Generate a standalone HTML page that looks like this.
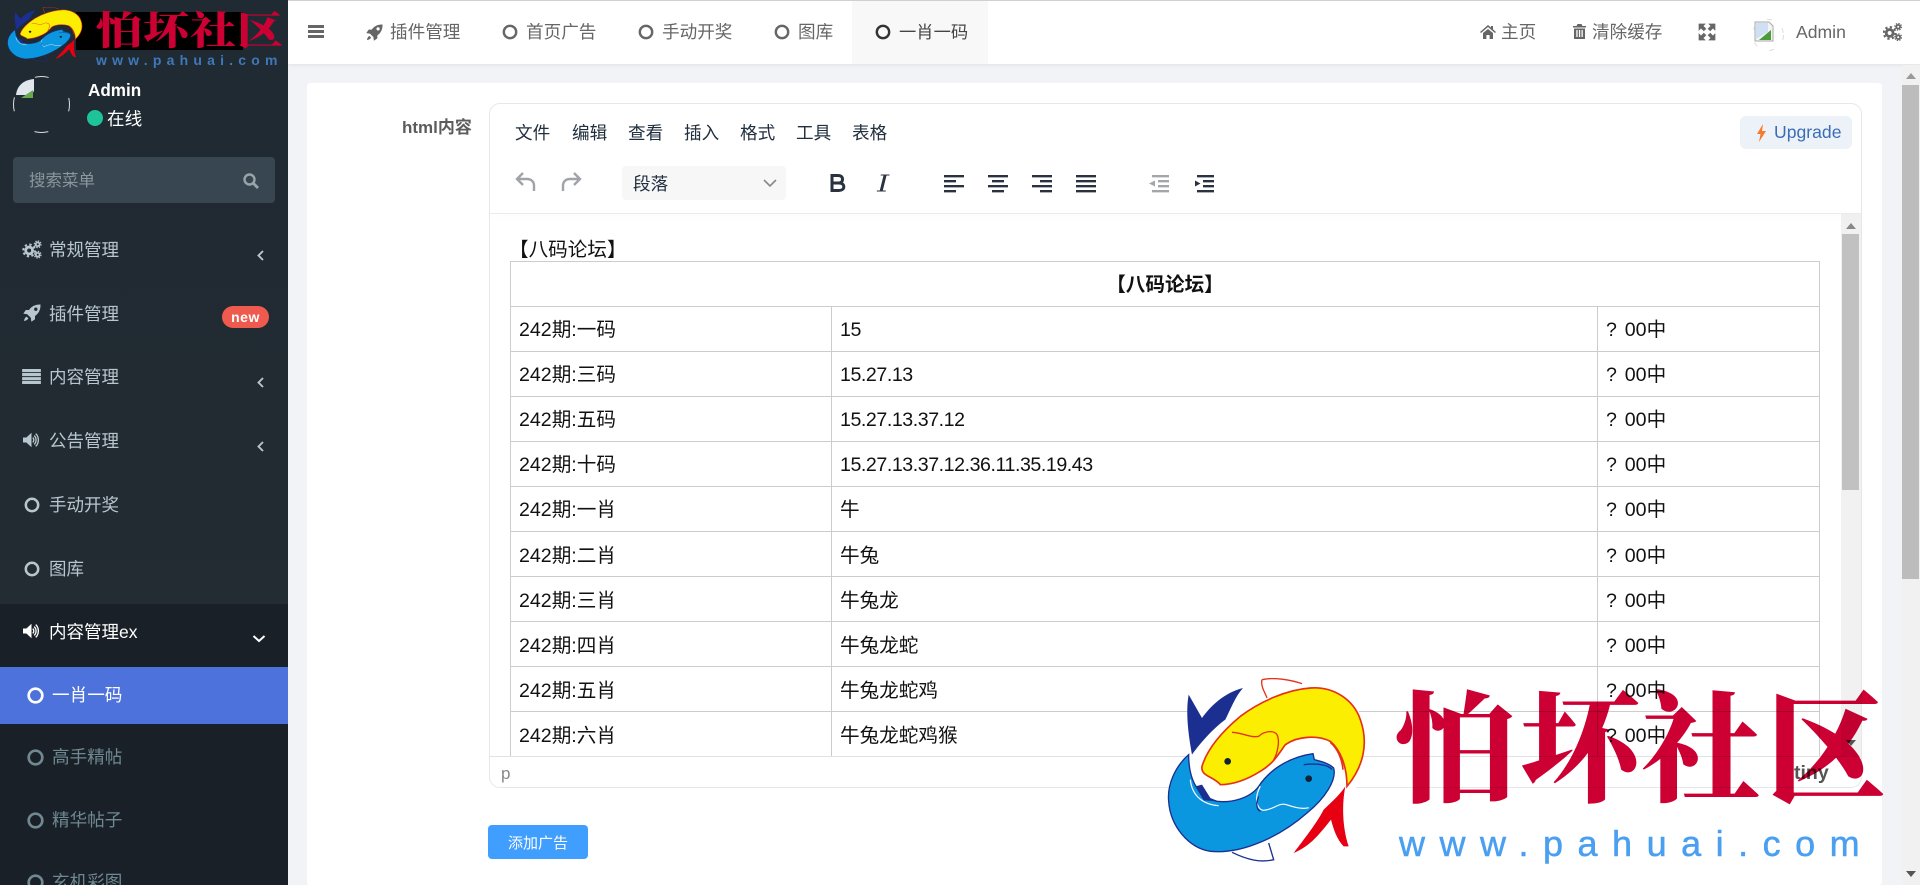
<!DOCTYPE html>
<html lang="zh"><head><meta charset="utf-8"><title>怕坏社区</title>
<style>
*{box-sizing:border-box}
html,body{margin:0;padding:0;width:1920px;height:885px;overflow:hidden;background:#f2f3f7;font-family:"Liberation Sans","Noto Sans CJK SC",sans-serif}
.a{position:absolute;white-space:pre;line-height:1}
svg.a{display:block;overflow:visible}
#side{position:absolute;left:0;top:0;width:288px;height:885px;background:linear-gradient(#202a32,#222b32 60%,#272f36);overflow:hidden}
.m{color:#b8c7ce;font-size:17.5px}
.h{color:#666;font-size:17.6px}
.ed{color:#222f3e;font-size:17.6px}
td{border:1px solid #ccc;padding:4px 0 0 8px;font-size:19.6px;color:#111;white-space:pre;height:45.05px;line-height:1}
td:last-child{word-spacing:-1.5px}
td.n{letter-spacing:-.44px}
table{border-collapse:collapse;table-layout:fixed;position:absolute;left:20px;top:47px;width:1309px;font-family:"Liberation Sans","Noto Sans CJK SC",sans-serif}
.zh{position:absolute;font-family:"Noto Serif CJK SC",serif;font-weight:900;color:#cc0033;line-height:1}
</style></head><body>
<svg width="0" height="0" style="position:absolute">
<defs>
<symbol id="cogs" viewBox="0 0 20 20"><circle cx="7" cy="11" r="3.6" fill="none" stroke="currentColor" stroke-width="3"/><circle cx="7" cy="11" r="6.2" fill="none" stroke="currentColor" stroke-width="2.2" stroke-dasharray="2.4 2.46"/><circle cx="16" cy="4.5" r="2" fill="none" stroke="currentColor" stroke-width="1.8"/><circle cx="16" cy="4.5" r="3.5" fill="none" stroke="currentColor" stroke-width="1.3" stroke-dasharray="1.5 1.25"/><circle cx="16" cy="15.5" r="2" fill="none" stroke="currentColor" stroke-width="1.8"/><circle cx="16" cy="15.5" r="3.5" fill="none" stroke="currentColor" stroke-width="1.3" stroke-dasharray="1.5 1.25"/></symbol>
<symbol id="rocket" viewBox="0 0 18 18"><path fill="currentColor" fill-rule="evenodd" d="M17.5.5c-5.2-.2-9 1.800-11.500 5.500H2.800L.3 9.600l3.900.6 3.600 3.600.6 3.900 3.600-2.500V12c3.700-2.600 5.700-6.300 5.500-11.500zM12.800 3.500a1.700 1.700 0 1 1 0 3.400 1.700 1.700 0 0 1 0-3.400zM3.600 12.600c-1.300.7-2.200 2-2.600 4.400 2.400-.4 3.700-1.300 4.400-2.600z"/></symbol>
<symbol id="vol" viewBox="0 0 20 18"><path fill="currentColor" d="M0 6h4l6-5.500v17L4 12H0z"/><path fill="none" stroke="currentColor" stroke-width="1.600" d="M11.500 6.200c1.600 1.500 1.600 4.100 0 5.600M13.200 3.800c2.900 2.800 2.900 7.600 0 10.400M15 1.500c4.100 4.100 4.100 10.900 0 15"/></symbol>
<symbol id="bars" viewBox="0 0 20 16"><path fill="currentColor" d="M0 0h20v3.300H0zM0 4.300h20v3.300H0zM0 8.600h20v3.300H0zM0 12.700h20v3.300H0z"/></symbol>
<symbol id="fish" viewBox="20 25 600 555" preserveAspectRatio="none">
<path fill="#1a2f8f" d="M85 75L125 145C150 110 190 70 248 55C225 80 210 120 195 150C160 175 120 220 95 255C85 200 75 130 85 75Z"/>
<path fill="#0b97e0" stroke="#1a2f8f" stroke-width="4" d="M85 255C45 290 20 345 25 395C30 470 85 535 150 545C245 555 360 500 440 430C495 385 530 330 520 295C505 280 480 275 462 270L458 252C400 260 335 290 295 350C270 385 215 400 170 395C120 385 85 340 85 255Z"/>
<path fill="#1a2f8f" d="M105 350L125 345L150 385L175 395L130 392Z"/>
<path fill="none" stroke="#fff" stroke-width="3.500" d="M300 350C280 385 290 420 310 422C340 420 355 398 378 405C400 412 425 420 445 414M90 330C95 380 130 405 175 408"/>
<path fill="none" stroke="#1a2f8f" stroke-width="4" d="M325 520L340 570C300 580 260 570 215 548"/>
<path fill="none" stroke="#1a2f8f" stroke-width="4" d="M295 380C285 405 290 420 300 425M430 285C470 280 505 285 515 300"/>
<path fill="#e60012" d="M555 350C545 400 545 470 565 530L550 530C530 510 520 480 512 450C480 490 450 530 400 550C430 510 470 460 490 420C510 400 535 380 555 350Z"/>
<path fill="#fbee00" stroke="#e6301a" stroke-width="5" d="M125 290C140 240 180 190 240 140C300 95 380 60 450 55C520 50 580 90 600 150C625 220 610 290 560 350C560 290 540 240 510 215C470 195 410 200 375 225C350 260 340 280 300 305C260 330 220 345 180 345C160 320 120 320 125 290Z"/>
<path fill="none" stroke="#e6301a" stroke-width="4" d="M215 188C250 190 270 205 295 200C310 185 340 180 350 195C360 215 350 255 340 270M305 30C340 22 390 30 425 42M305 30C300 50 315 70 320 85"/>
<path fill="none" stroke="#e6301a" stroke-width="5" d="M510 218C530 235 545 265 548 300"/>
<circle cx="202" cy="275" r="10" fill="#123"/><circle cx="445" cy="327" r="10" fill="#123"/>
</symbol>
</defs></svg>

<div style="position:absolute;left:288px;top:0;width:1632px;height:64px;background:#fff;border-top:1px solid #cfd1cf;box-shadow:0 1px 4px rgba(0,0,0,.08)"></div>
<div style="position:absolute;left:852px;top:1px;width:136px;height:63px;background:#f8f8f9"></div>

<!-- header -->
<svg class="a" style="left:308px;top:25px" width="16" height="13"><path fill="#666" d="M0 0h16v3H0zM0 5h16v3H0zM0 10h16v3H0z"/></svg>
<svg class="a" style="left:366px;top:24px;color:#666" width="17" height="17"><use href="#rocket"/></svg>
<div class="a h" style="left:390px;top:24px">插件管理</div>
<svg class="a" style="left:502px;top:24px" width="16" height="16"><circle cx="8" cy="8" r="6.200" fill="none" stroke="#666" stroke-width="2.400"/></svg>
<div class="a h" style="left:526px;top:24px">首页广告</div>
<svg class="a" style="left:638px;top:24px" width="16" height="16"><circle cx="8" cy="8" r="6.200" fill="none" stroke="#666" stroke-width="2.400"/></svg>
<div class="a h" style="left:662px;top:24px">手动开奖</div>
<svg class="a" style="left:774px;top:24px" width="16" height="16"><circle cx="8" cy="8" r="6.200" fill="none" stroke="#666" stroke-width="2.400"/></svg>
<div class="a h" style="left:798px;top:24px">图库</div>
<svg class="a" style="left:875px;top:24px" width="16" height="16"><circle cx="8" cy="8" r="6.200" fill="none" stroke="#333" stroke-width="2.400"/></svg>
<div class="a h" style="left:899px;top:24px;color:#444;font-size:17.300px">一肖一码</div>

<svg class="a" style="left:1480px;top:24px" width="16" height="15" viewBox="0 0 16 15"><path fill="#666" d="M0 8L8 1l3 2.500V2h2v3.300L16 8l-1 1-7-6-7 6zM3 9l5-4 5 4v6H9.600v-4H6.400v4H3z"/></svg>
<div class="a h" style="left:1501px;top:24px">主页</div>
<svg class="a" style="left:1573px;top:24px" width="13" height="15" viewBox="0 0 13 15"><path fill="#666" fill-rule="evenodd" d="M0 2h3.500L4.500 0h4l1 2H13v1.500H0zM1 4.500h11V15H1zM3.300 6v7h1.300V6zM5.900 6v7h1.300V6zM8.500 6v7h1.300V6z"/></svg>
<div class="a h" style="left:1592px;top:24px">清除缓存</div>
<svg class="a" style="left:1699px;top:24px" width="16" height="16" viewBox="0 0 16 16"><path fill="#666" stroke="#666" stroke-width=".7" d="M0 0h6L4 2l2.800 2.800-2 2L2 4 0 6zM16 0v6l-2-2-2.800 2.800-2-2L12 2l-2-2zM0 16v-6l2 2 2.800-2.800 2 2L4 14l2 2zM16 16h-6l2-2-2.800-2.800 2-2L14 12l2-2z"/></svg>
<!-- avatar top -->
<svg class="a" style="left:1752px;top:19px" width="32" height="32" viewBox="0 0 32 32"><circle cx="16" cy="16" r="15.500" fill="none" stroke="#ddd" stroke-width="1" stroke-dasharray="5 13"/><path fill="#f4f4f4" stroke="#aaa" d="M3 3h14l4 4v15H3z"/><path fill="#cfe0f4" d="M4 4h12v9L4 20z"/><path fill="#4d9a3c" d="M7 21l12-10v10z"/></svg>
<div class="a" style="left:1796px;top:24px;color:#666;font-size:17.600px">Admin</div>
<svg class="a" style="left:1883px;top:22px;color:#666" width="19" height="20"><use href="#cogs"/></svg>

<!-- card -->
<div style="position:absolute;left:307px;top:83px;width:1575px;height:802px;background:#fff;border-radius:3px"></div>
<div class="a" style="left:402px;top:119px;color:#5c5c5c;font-size:17px;font-weight:700">html内容</div>

<!-- editor -->
<div style="position:absolute;left:489px;top:103px;width:1373px;height:685px;border:1px solid #e6e7ea;border-radius:11px;background:#fff;overflow:hidden">
 <div style="position:absolute;left:0;top:109px;width:1371px;height:1px;background:#ececec;box-shadow:0 2px 8px rgba(0,0,0,.08);z-index:3"></div>
 <div style="position:absolute;left:0;top:110px;width:1351px;height:543px;overflow:hidden">
  <div class="a" style="left:19px;top:27px;font-size:19.600px;color:#111">【八码论坛】</div>
  <table><colgroup><col style="width:321px"><col style="width:766px"><col style="width:222px"></colgroup>
  <tr><td colspan="3" style="text-align:center;font-weight:700;padding:4px 0 0">【八码论坛】</td></tr>
  <tr><td>242期:一码</td><td class="n">15</td><td>?  00中</td></tr>
  <tr><td>242期:三码</td><td class="n">15.27.13</td><td>?  00中</td></tr>
  <tr><td>242期:五码</td><td class="n">15.27.13.37.12</td><td>?  00中</td></tr>
  <tr><td>242期:十码</td><td class="n">15.27.13.37.12.36.11.35.19.43</td><td>?  00中</td></tr>
  <tr><td>242期:一肖</td><td>牛</td><td>?  00中</td></tr>
  <tr><td>242期:二肖</td><td>牛兔</td><td>?  00中</td></tr>
  <tr><td>242期:三肖</td><td>牛兔龙</td><td>?  00中</td></tr>
  <tr><td>242期:四肖</td><td>牛兔龙蛇</td><td>?  00中</td></tr>
  <tr><td>242期:五肖</td><td>牛兔龙蛇鸡</td><td>?  00中</td></tr>
  <tr><td>242期:六肖</td><td>牛兔龙蛇鸡猴</td><td>?  00中</td></tr>
  <tr><td>242期:七肖</td><td>牛兔龙蛇鸡猴狗</td><td>?  00中</td></tr>
  </table>
 </div>
 <div style="position:absolute;left:1351px;top:110px;width:20px;height:543px;background:#f1f1f1"></div>
 <div style="position:absolute;left:1352px;top:130px;width:17px;height:256px;background:#c1c1c1"></div>
 <svg class="a" style="left:1355px;top:119px" width="12" height="7"><path fill="#888" d="M6 0l5 6H1z"/></svg>
 <svg class="a" style="left:1355px;top:636px" width="12" height="7"><path fill="#555" d="M1 0h10L6 6z"/></svg>
 <div style="position:absolute;left:0;top:652px;width:1371px;height:1px;background:#e2e2e2"></div>
 <div class="a" style="left:11px;top:661px;font-size:17px;color:#888">p</div>
 <div class="a" style="left:1304px;top:660px;font-size:19.500px;font-weight:700;color:#555">tiny</div>
 <div style="position:absolute;left:1250px;top:12px;width:112px;height:33px;background:#edf2f9;border-radius:6px"></div>
 <svg class="a" style="left:1266px;top:20px" width="11" height="18" viewBox="0 0 11 18"><path fill="#f47b2a" d="M7 0L1 10h3.500L3 18l7-11H6z"/></svg>
 <div class="a" style="left:1284px;top:20px;color:#3a6db5;font-size:17.600px">Upgrade</div>

 <div class="a ed" style="left:25px;top:21px">文件</div><div class="a ed" style="left:82px;top:21px">编辑</div><div class="a ed" style="left:138px;top:21px">查看</div><div class="a ed" style="left:194px;top:21px">插入</div><div class="a ed" style="left:250px;top:21px">格式</div><div class="a ed" style="left:306px;top:21px">工具</div><div class="a ed" style="left:362px;top:21px">表格</div>

 <svg class="a" style="left:25px;top:67px" width="21" height="21" viewBox="0 0 21 21"><path fill="none" stroke="#a0a3a8" stroke-width="2.400" d="M8 2L2 8l6 6M2 8h10c4.500 0 7 3 7 6.500V20"/></svg>
 <svg class="a" style="left:71px;top:67px" width="21" height="21" viewBox="0 0 21 21"><path fill="none" stroke="#a0a3a8" stroke-width="2.400" d="M13 2l6 6-6 6M19 8H9c-4.500 0-7 3-7 6.500V20"/></svg>
 <div style="position:absolute;left:132px;top:62px;width:164px;height:34px;background:#f7f7f8;border-radius:4px"></div>
 <div class="a" style="left:143px;top:72px;color:#222f3e;font-size:17.600px">段落</div>
 <svg class="a" style="left:273px;top:75px" width="14" height="9"><path fill="none" stroke="#888" stroke-width="1.600" d="M1 1l6 6 6-6"/></svg>
 <svg class="a" style="left:340px;top:70px" width="16" height="18" viewBox="0 0 16 18"><path fill="none" stroke="#2a3240" stroke-width="3" d="M2 9h6.500c2.500 0 4-1.500 4-3.800S11 1.500 8 1.500H2V16.500h6.800c3 0 5-1.500 5-3.800S11.800 9 8.500 9"/></svg>
 <svg class="a" style="left:386px;top:70px" width="14" height="18" viewBox="0 0 14 18"><path fill="#2a3240" d="M5 .5h8.500v1h-3L6.800 16.500h3v1H.8v-1h3L7.500 1.500h-3z"/></svg>
 <svg class="a" style="left:454px;top:71px" width="22" height="18" viewBox="0 0 22 18"><path fill="#2a3240" d="M0 0h20v2.400H0zM0 5h12v2.400H0zM0 10h20v2.400H0zM0 15h12v2.400H0z"/></svg>
 <svg class="a" style="left:498px;top:71px" width="22" height="18" viewBox="0 0 22 18"><path fill="#2a3240" d="M0 0h20v2.400H0zM4 5h12v2.400H4zM0 10h20v2.400H0zM4 15h12v2.400H4z"/></svg>
 <svg class="a" style="left:542px;top:71px" width="22" height="18" viewBox="0 0 22 18"><path fill="#2a3240" d="M0 0h20v2.400H0zM8 5h12v2.400H8zM0 10h20v2.400H0zM8 15h12v2.400H8z"/></svg>
 <svg class="a" style="left:586px;top:71px" width="22" height="18" viewBox="0 0 22 18"><path fill="#2a3240" d="M0 0h20v2.400H0zM0 5h20v2.400H0zM0 10h20v2.400H0zM0 15h20v2.400H0z"/></svg>
 <svg class="a" style="left:659px;top:71px" width="22" height="18" viewBox="0 0 22 18"><path fill="#a3a6ab" d="M3 0h17v2.400H3zM9 5h11v2.400H9zM9 10h11v2.400H9zM3 15h17v2.400H3zM6 5.500v6L0 8.500z"/></svg>
 <svg class="a" style="left:704px;top:71px" width="22" height="18" viewBox="0 0 22 18"><path fill="#2a3240" d="M3 0h17v2.400H3zM9 5h11v2.400H9zM9 10h11v2.400H9zM3 15h17v2.400H3zM1 5.500v6L6.500 8.500z"/></svg>
</div>

<div style="position:absolute;left:488px;top:825px;width:100px;height:34px;background:#409eff;border-radius:4px"></div>
<div class="a" style="left:508px;top:836px;color:#fff;font-size:15px">添加广告</div>

<!-- page scrollbar -->
<div style="position:absolute;left:1902px;top:65px;width:18px;height:820px;background:#f1f1f1"></div>
<div style="position:absolute;left:1902px;top:85px;width:17px;height:494px;background:#bcbcbc"></div>
<svg class="a" style="left:1906px;top:73px" width="10" height="6"><path fill="#999" d="M5 0l5 6H0z"/></svg>
<svg class="a" style="left:1906px;top:871px" width="10" height="6"><path fill="#555" d="M0 0h10L5 6z"/></svg>

<!-- sidebar -->
<div id="side">
 <div style="position:absolute;left:76px;top:12px;width:167px;height:38px;background:#000"></div>
 <svg class="a" style="left:7px;top:7px" width="76" height="55"><use href="#fish" width="76" height="55"/></svg>
 <div class="zh" style="left:96px;top:9px;font-size:46px;transform:scale(1,.85);transform-origin:0 0">怕</div>
 <div class="zh" style="left:143px;top:9px;font-size:46px;transform:scale(1,.85);transform-origin:0 0">坏</div>
 <div class="zh" style="left:190px;top:9px;font-size:46px;transform:scale(1,.85);transform-origin:0 0">社</div>
 <div class="zh" style="left:237px;top:9px;font-size:46px;transform:scale(1,.85);transform-origin:0 0">区</div>
 <div class="a" style="left:96px;top:53px;color:#3f78b8;font-size:14px;letter-spacing:5.200px;font-weight:700">www.pahuai.com</div>

 <svg class="a" style="left:13px;top:76px" width="57" height="57" viewBox="0 0 57 57"><circle cx="28.500" cy="28.500" r="28" fill="none" stroke="#ddd" stroke-width="1" stroke-dasharray="14 30" stroke-dashoffset="7"/><path fill="#dfe6ee" d="M3 19C4 10 10 4 21 3v12l-3 4z"/><path fill="#6aa84f" d="M8 22l12-8v8z"/></svg>
 <div class="a" style="left:88px;top:82px;color:#fff;font-size:17.100px;font-weight:700">Admin</div>
 <div style="position:absolute;left:87px;top:110px;width:16px;height:16px;border-radius:50%;background:#1fc39a"></div>
 <div class="a" style="left:107px;top:111px;color:#fff;font-size:17.600px">在线</div>

 <div style="position:absolute;left:13px;top:157px;width:262px;height:46px;background:#374650;border-radius:4px"></div>
 <div class="a" style="left:29px;top:173px;color:#8b969d;font-size:16.500px">搜索菜单</div>
 <svg class="a" style="left:243px;top:173px" width="16" height="16" viewBox="0 0 16 16"><circle cx="6.500" cy="6.500" r="5" fill="none" stroke="#99a3a9" stroke-width="2.400"/><path stroke="#99a3a9" stroke-width="2.800" d="M10 10l5 5"/></svg>

 <svg class="a" style="left:22px;top:240px;color:#b8c7ce" width="20" height="19"><use href="#cogs"/></svg>
 <div class="a m" style="left:49px;top:242px">常规管理</div>
 <svg class="a" style="left:257px;top:250px" width="9" height="12"><path fill="none" stroke="#b8c7ce" stroke-width="1.900" d="M6 1L1.500 5.500 6 10"/></svg>

 <svg class="a" style="left:23px;top:304px;color:#b8c7ce" width="18" height="18"><use href="#rocket"/></svg>
 <div class="a m" style="left:49px;top:306px">插件管理</div>
 <div class="a" style="left:222px;top:306px;width:47px;height:22px;border-radius:11px;background:#ef5a4e;color:#fff;font-size:14px;font-weight:700;text-align:center;line-height:22px;letter-spacing:.5px">new</div>

 <svg class="a" style="left:22px;top:369px;color:#b8c7ce" width="19" height="15"><use href="#bars"/></svg>
 <div class="a m" style="left:49px;top:369px">内容管理</div>
 <svg class="a" style="left:257px;top:377px" width="9" height="12"><path fill="none" stroke="#b8c7ce" stroke-width="1.900" d="M6 1L1.500 5.500 6 10"/></svg>

 <svg class="a" style="left:23px;top:432px;color:#b8c7ce" width="17" height="16"><use href="#vol"/></svg>
 <div class="a m" style="left:49px;top:433px">公告管理</div>
 <svg class="a" style="left:257px;top:441px" width="9" height="12"><path fill="none" stroke="#b8c7ce" stroke-width="1.900" d="M6 1L1.500 5.500 6 10"/></svg>

 <svg class="a" style="left:24px;top:497px" width="16" height="16"><circle cx="8" cy="8" r="6.200" fill="none" stroke="#b8c7ce" stroke-width="2.500"/></svg>
 <div class="a m" style="left:49px;top:497px">手动开奖</div>
 <svg class="a" style="left:24px;top:561px" width="16" height="16"><circle cx="8" cy="8" r="6.200" fill="none" stroke="#b8c7ce" stroke-width="2.500"/></svg>
 <div class="a m" style="left:49px;top:561px">图库</div>

 <div style="position:absolute;left:0;top:604px;width:288px;height:281px;background:#1a2027"></div>
 <svg class="a" style="left:23px;top:623px;color:#fff" width="17" height="16"><use href="#vol"/></svg>
 <div class="a" style="left:49px;top:624px;color:#fff;font-size:17.500px">内容管理ex</div>
 <svg class="a" style="left:252px;top:634px" width="14" height="10"><path fill="none" stroke="#fff" stroke-width="2" d="M1.500 2l5.500 5 5.500-5"/></svg>

 <div style="position:absolute;left:0;top:667px;width:288px;height:57px;background:#4d72dc"></div>
 <svg class="a" style="left:27px;top:687px" width="17" height="17"><circle cx="8.500" cy="8.500" r="6.800" fill="none" stroke="#fff" stroke-width="2.700"/></svg>
 <div class="a" style="left:52px;top:687px;color:#fff;font-size:17.600px">一肖一码</div>
 <svg class="a" style="left:27px;top:749px" width="17" height="17"><circle cx="8.500" cy="8.500" r="6.800" fill="none" stroke="#6f8891" stroke-width="2.700"/></svg>
 <div class="a" style="left:52px;top:749px;color:#6f8891;font-size:17.600px">高手精帖</div>
 <svg class="a" style="left:27px;top:812px" width="17" height="17"><circle cx="8.500" cy="8.500" r="6.800" fill="none" stroke="#6f8891" stroke-width="2.700"/></svg>
 <div class="a" style="left:52px;top:812px;color:#6f8891;font-size:17.600px">精华帖子</div>
 <svg class="a" style="left:27px;top:874px" width="17" height="17"><circle cx="8.500" cy="8.500" r="6.800" fill="none" stroke="#6f8891" stroke-width="2.700"/></svg>
 <div class="a" style="left:52px;top:874px;color:#6f8891;font-size:17.600px">玄机彩图</div>
</div>

<!-- watermark -->
<svg class="a" style="left:1167px;top:678px" width="200" height="185" viewBox="20 25 600 555" preserveAspectRatio="none"><path fill="#fff" d="M85 75L248 55L305 30L425 42L520 50L600 130L620 220L590 320L565 530L400 555L340 575L215 548L100 500L25 400L50 290L85 250Z"/></svg>
<svg class="a" style="left:1167px;top:678px" width="200" height="185"><use href="#fish" width="200" height="185"/></svg>
<div style="position:absolute;left:0;top:0;width:1920px;height:885px;mix-blend-mode:multiply;pointer-events:none">
 <div class="zh" style="left:1395px;top:681px;font-size:120px">怕</div>
 <div class="zh" style="left:1520px;top:681px;font-size:120px">坏</div>
 <div class="zh" style="left:1641px;top:681px;font-size:120px">社</div>
 <div class="zh" style="left:1766px;top:681px;font-size:120px">区</div>
</div>
<div class="a" style="left:1399px;top:826px;color:#4a9ff0;font-size:36px;letter-spacing:14.500px;-webkit-text-stroke:.5px #4a9ff0">www.pahuai.com</div>
</body></html>
